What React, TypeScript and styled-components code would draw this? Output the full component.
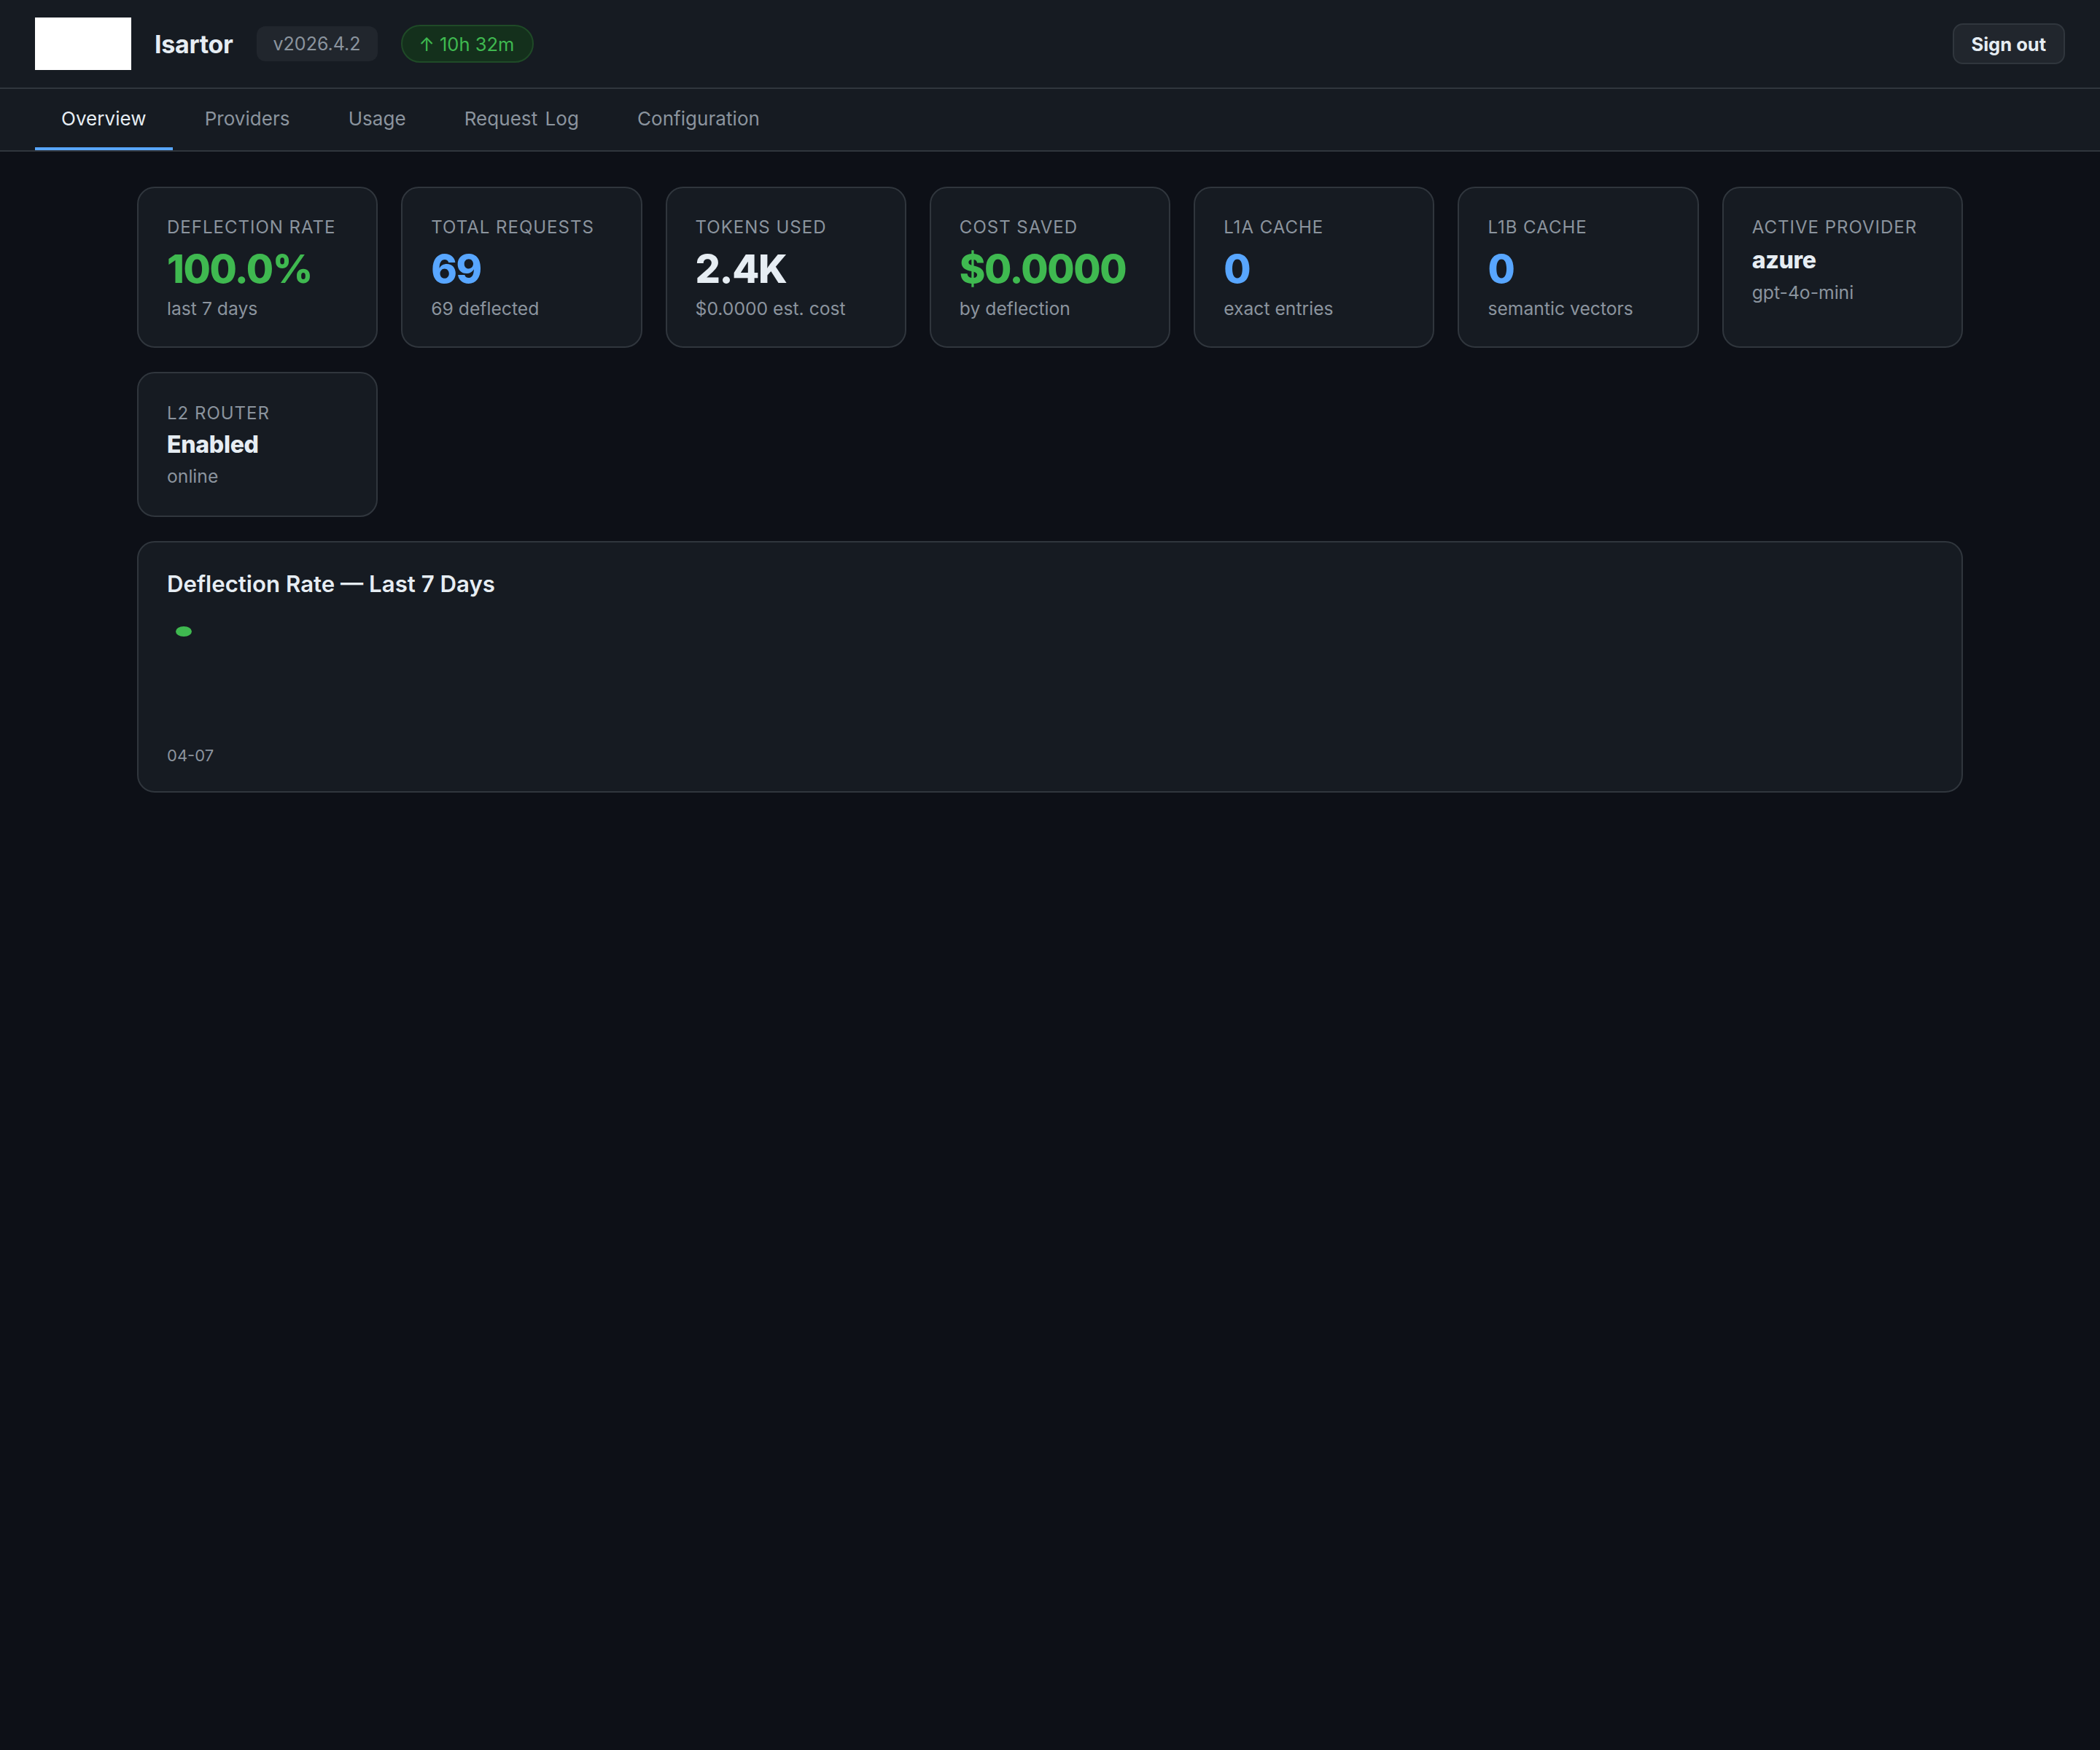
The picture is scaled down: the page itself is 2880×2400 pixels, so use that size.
import styled, { createGlobalStyle } from "styled-components";

const GlobalStyle = createGlobalStyle`
    html, body {
        margin: 0;
        padding: 0;
        min-height: 2400px;
        background: #0d1017;
        color: #e6edf3;
        font-family: Inter, "Liberation Sans", sans-serif;
    }
`;

const Header = styled.header`
    display: flex;
    align-items: center;
    gap: 32px;
    height: 120px;
    padding: 0 48px;
    background: #161b22;
    border-bottom: 2px solid #30363d;
`;

const Logo = styled.div`
    width: 132px;
    height: 72px;
    background: #fff;
`;

const Brand = styled.span`
    font-size: 34px;
    font-weight: 700;
    letter-spacing: -0.3px;
    color: #e6edf3;
`;

const Version = styled.span`
    display: flex;
    align-items: center;
    height: 48px;
    padding: 0 23px;
    border-radius: 12px;
    background: #21262d;
    color: #8b949e;
    font-size: 25px;
`;

const Uptime = styled.span`
    display: flex;
    align-items: center;
    box-sizing: border-box;
    height: 52px;
    padding: 0 25px 0 23px;
    border: 2px solid #1f4a27;
    border-radius: 26px;
    background: #14301c;
    color: #3fb950;
    font-size: 25.5px;
`;

const SignOut = styled.button`
    margin-left: auto;
    box-sizing: border-box;
    height: 56px;
    padding: 0 24px;
    border: 2px solid #30363d;
    border-radius: 14px;
    background: #21262d;
    color: #e6edf3;
    font-family: inherit;
    font-size: 25.5px;
    font-weight: 700;
`;

const Tabs = styled.nav`
    display: flex;
    gap: 8px;
    height: 84px;
    padding: 0 48px;
    background: #161b22;
    border-bottom: 2px solid #30363d;
`;

const Tab = styled.a<{ $active?: boolean }>`
    display: flex;
    align-items: center;
    padding: 0 36px;
    border-bottom: 4px solid ${props => (props.$active ? "#58a6ff" : "transparent")};
    color: ${props => (props.$active ? "#e6edf3" : "#8b949e")};
    font-size: 26px;
    letter-spacing: 0.05px;
    word-spacing: 3px;
`;

const Main = styled.main`
    width: 2504px;
    margin: 0 auto;
    padding-top: 48px;
`;

const Grid = styled.div`
    display: grid;
    grid-template-columns: repeat(7, 1fr);
    gap: 33px 32px;
    margin-bottom: 33px;
`;

const Card = styled.div<{ $compact?: boolean }>`
    padding: ${props => (props.$compact ? "38px 38px 37px 39px" : "37px 38px 35px 39px")};
    border: 2px solid #30363d;
    border-radius: 24px;
    background: #161b22;
`;

const Label = styled.div`
    font-size: 24px;
    line-height: 34px;
    letter-spacing: 1px;
    text-transform: uppercase;
    color: #8b949e;
`;

const Value = styled.div<{ $color?: string; $small?: boolean; $compact?: boolean }>`
    margin: ${props => (props.$compact ? "6px 0" : props.$small ? "8px 0 7px" : "8px 0 5px")};
    font-size: ${props => (props.$small ? "32px" : "54px")};
    line-height: ${props => (props.$small ? "40px" : "64px")};
    letter-spacing: ${props => (props.$small ? "-0.3px" : "-1.4px")};
    font-weight: 800;
    color: ${props => props.$color || "#e6edf3"};
`;

const Sub = styled.div`
    font-size: 24.7px;
    line-height: 34px;
    color: #8b949e;
`;

const Panel = styled.section`
    padding: 37px 38px 35px 39px;
    border: 2px solid #30363d;
    border-radius: 24px;
    background: #161b22;
`;

const PanelTitle = styled.h2`
    margin: 0 0 24px;
    font-size: 31.2px;
    line-height: 40px;
    font-weight: 600;
    color: #e6edf3;
`;

const Chart = styled.svg`
    display: block;
    width: 100%;
    height: 170px;
`;

const ChartLabel = styled.div`
    margin-top: 7px;
    font-size: 22px;
    line-height: 28px;
    color: #8b949e;
`;

const GREEN = "#3fb950";
const BLUE = "#58a6ff";

const stats = [
    { label: "Deflection Rate", value: "100.0%", sub: "last 7 days", color: GREEN },
    { label: "Total Requests", value: "69", sub: "69 deflected", color: BLUE },
    { label: "Tokens Used", value: "2.4K", sub: "$0.0000 est. cost" },
    { label: "Cost Saved", value: "$0.0000", sub: "by deflection", color: GREEN },
    { label: "L1a Cache", value: "0", sub: "exact entries", color: BLUE },
    { label: "L1b Cache", value: "0", sub: "semantic vectors", color: BLUE },
    { label: "Active Provider", value: "azure", sub: "gpt-4o-mini", small: true },
    { label: "L2 Router", value: "Enabled", sub: "online", small: true, compact: true }
];

const tabs = ["Overview", "Providers", "Usage", "Request Log", "Configuration"];

const App = () => {
    return (
        <>
            <GlobalStyle />
            <Header>
                <Logo />
                <Brand>Isartor</Brand>
                <Version>v2026.4.2</Version>
                <Uptime>↑ 10h 32m</Uptime>
                <SignOut>Sign out</SignOut>
            </Header>
            <Tabs>
                {tabs.map((tab, i) => (
                    <Tab key={tab} $active={i === 0}>{tab}</Tab>
                ))}
            </Tabs>
            <Main>
                <Grid>
                    {stats.map(stat => (
                        <Card key={stat.label} $compact={stat.compact}>
                            <Label>{stat.label}</Label>
                            <Value $color={stat.color} $small={stat.small} $compact={stat.compact}>{stat.value}</Value>
                            <Sub>{stat.sub}</Sub>
                        </Card>
                    ))}
                </Grid>
                <Panel>
                    <PanelTitle>Deflection Rate — Last 7 Days</PanelTitle>
                    <Chart viewBox="0 0 2423 170" preserveAspectRatio="none">
                        <ellipse cx="23" cy="21" rx="11" ry="7" fill={GREEN} />
                    </Chart>
                    <ChartLabel>04-07</ChartLabel>
                </Panel>
            </Main>
        </>
    );
};

export default App;
